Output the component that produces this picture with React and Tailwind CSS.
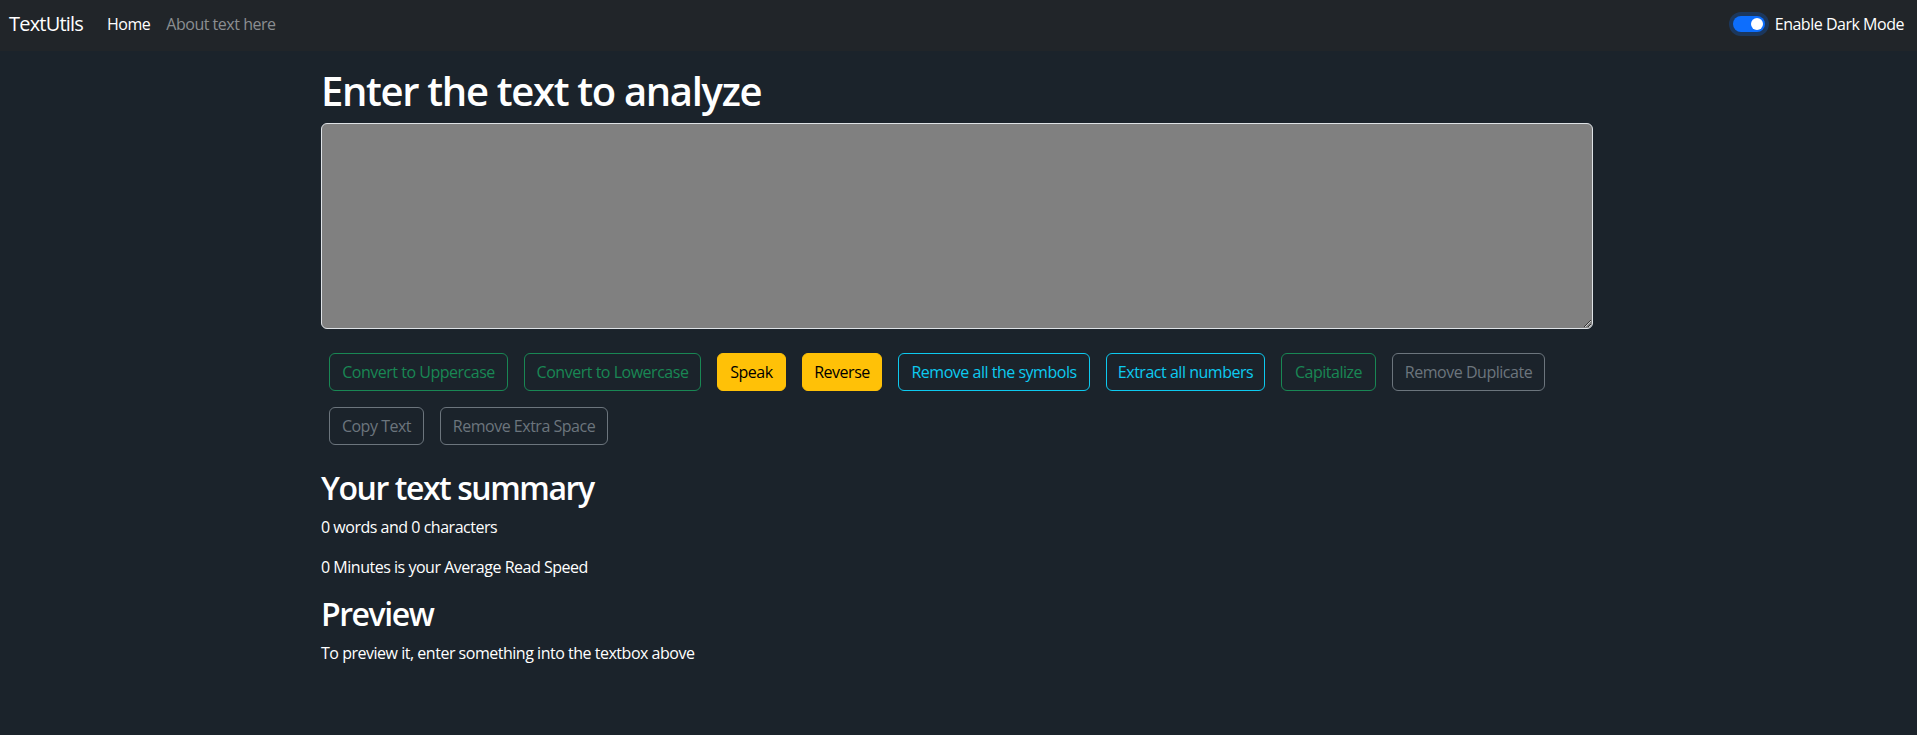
import React from "react";

const buttons1 = [
  { label: "Convert to Uppercase", w: "w-[179px]", kind: "success" },
  { label: "Convert to Lowercase", w: "w-[177px]", kind: "success" },
  { label: "Speak", w: "w-[69px]", kind: "warning" },
  { label: "Reverse", w: "w-[80px]", kind: "warning" },
  { label: "Remove all the symbols", w: "w-[192px]", kind: "info" },
  { label: "Extract all numbers", w: "w-[159px]", kind: "info" },
  { label: "Capitalize", w: "w-[95px]", kind: "success" },
  { label: "Remove Duplicate", w: "w-[153px]", kind: "secondary" },
  { label: "Copy Text", w: "w-[95px]", kind: "secondary" },
  { label: "Remove Extra Space", w: "w-[168px]", kind: "secondary" },
];

const kindClass = {
  success: "border-[#198754] text-[#198754] bg-transparent",
  warning: "border-[#ffc107] bg-[#ffc107] text-black",
  info: "border-[#0dcaf0] text-[#0dcaf0] bg-transparent",
  secondary: "border-[#6c757d] text-[#6c757d] bg-transparent",
};

export default function App() {
  return (
    <div className="min-h-screen bg-[#1b232b] text-white font-['Open_Sans','Noto_Sans',sans-serif] tracking-[-0.03em]">
      <nav className="h-[51px] pb-[3px] bg-[#212529] flex items-center justify-between pl-[9px] pr-[13px]">
        <div className="flex items-center">
          <span className="text-[20px] leading-[30px] text-white mr-4 tracking-[-0.04em]">TextUtils</span>
          <span className="px-2 text-base leading-6 text-white">Home</span>
          <span className="px-2 text-base leading-6 text-[#8b8e91]">About text here</span>
        </div>
        <div className="flex items-center">
          <div className="w-[32px] h-[16px] rounded-full bg-[#0d6efd] shadow-[0_0_0_4px_rgba(13,110,253,0.25)] flex items-center justify-end pr-[2px]">
            <div className="w-[12px] h-[12px] rounded-full bg-white"></div>
          </div>
          <span className="ml-[10px] text-base leading-6 text-white">Enable Dark Mode</span>
        </div>
      </nav>

      <main className="ml-[321px] w-[1272px] pt-4">
        <h1 className="text-[40px] leading-[48px] font-semibold tracking-[-0.033em] mb-2 text-white">Enter the text to analyze</h1>
        <textarea
          className="block w-full h-[206px] bg-[#808080] border border-[#dee2e6] rounded-[6px] px-3 py-[6px] text-base leading-6 text-white outline-none mb-4"
          defaultValue=""
        />
        <div className="flex flex-wrap">
          {buttons1.map((b) => (
            <button
              key={b.label}
              className={`m-2 h-[38px] ${b.w} rounded-[6px] border text-base leading-6 whitespace-nowrap flex items-center justify-center ${kindClass[b.kind]}`}
            >
              {b.label}
            </button>
          ))}
        </div>
        <section className="mt-4">
          <h2 className="text-[32px] leading-[38px] font-semibold tracking-[-0.045em] mb-2 text-white">Your text summary</h2>
          <p className="text-base leading-6 mb-4">0 words and 0 characters</p>
          <p className="text-base leading-6 mb-4">0 Minutes is your Average Read Speed</p>
          <h2 className="text-[32px] leading-[38px] font-semibold tracking-[-0.045em] mb-2 text-white">Preview</h2>
          <p className="text-base leading-6 mb-4">To preview it, enter something into the textbox above</p>
        </section>
      </main>
    </div>
  );
}
